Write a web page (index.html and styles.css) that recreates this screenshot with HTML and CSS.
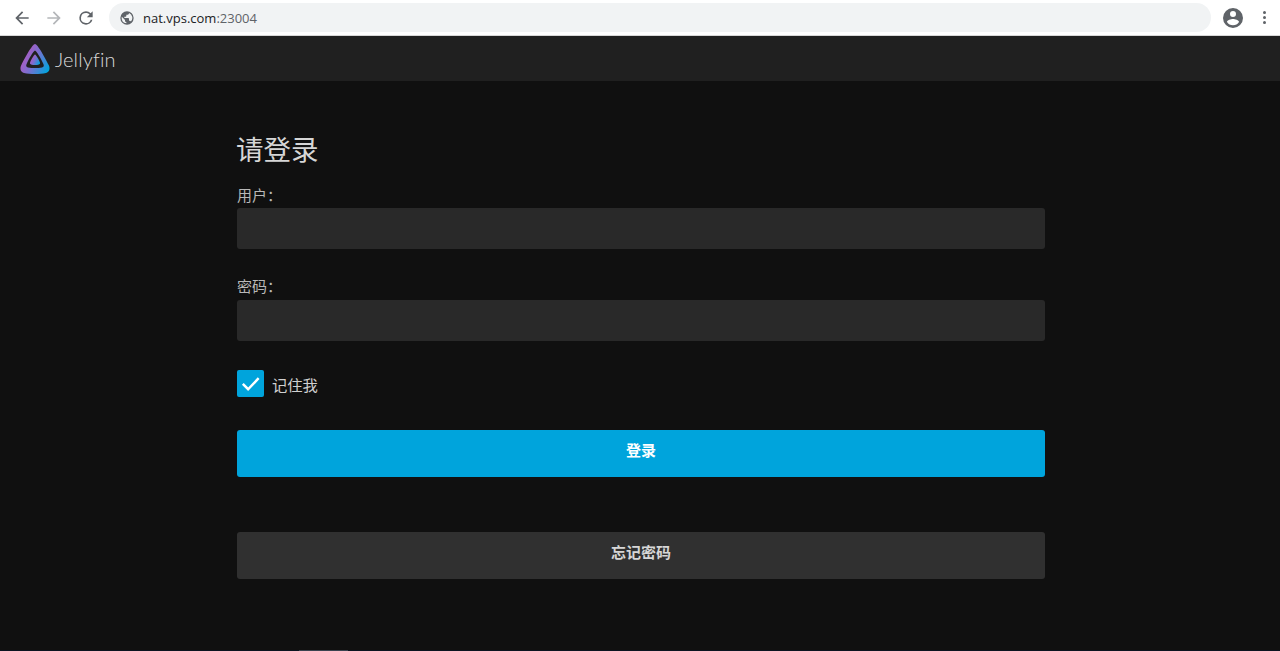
FILE: index.html
```html
<!DOCTYPE html>
<html lang="zh">
<head>
  <meta charset="UTF-8">
  <title>Jellyfin</title>
  <link rel="stylesheet" href="styles.css">
</head>
<body>
  <!-- Browser toolbar -->
  <div class="toolbar">
    <svg class="nav-icon" viewBox="0 0 24 24"><path fill="#5f6368" d="M20 11H7.830l5.590-5.590L12 4l-8 8 8 8 1.410-1.410L7.830 13H20z"/></svg>
    <svg class="nav-icon" viewBox="0 0 24 24"><path fill="#b4b6b9" d="M4 11h12.170l-5.590-5.590L12 4l8 8-8 8-1.410-1.410L16.170 13H4z"/></svg>
    <svg class="nav-icon" viewBox="0 0 24 24"><path fill="#5f6368" d="M17.650 6.350A7.960 7.960 0 0 0 12 4a8 8 0 1 0 7.730 10h-2.080A6 6 0 1 1 12 6c1.660 0 3.140.690 4.220 1.780L13 11h7V4z"/></svg>
    <div class="omnibox">
      <svg class="globe" viewBox="0 0 24 24"><path fill="#5f6368" d="M12 2a10 10 0 1 0 0 20 10 10 0 0 0 0-20zm-1 17.930A8 8 0 0 1 4 12c0-.620.080-1.210.210-1.790L9 15v1c0 1.100.900 2 2 2zm6.900-2.540A2 2 0 0 0 16 16h-1v-3c0-.550-.450-1-1-1H8v-2h2c.550 0 1-.450 1-1V7h2c1.100 0 2-.900 2-2v-.410a8 8 0 0 1 2.900 12.800z"/></svg>
      <span class="url">nat.vps.com<span class="url-port">:23004</span></span>
    </div>
    <svg class="avatar" viewBox="0 0 24 24"><path fill="#5f6368" d="M12 2a10 10 0 1 0 0 20 10 10 0 0 0 0-20zm0 3a3 3 0 1 1 0 6 3 3 0 0 1 0-6zm0 14.200a7.200 7.200 0 0 1-6-3.220c.030-1.990 4-3.080 6-3.080s5.970 1.090 6 3.080a7.200 7.200 0 0 1-6 3.220z"/></svg>
    <div class="menu-dots"><i></i><i></i><i></i></div>
  </div>

  <!-- App header -->
  <div class="header">
    <svg class="logo" viewBox="0 0 32 32">
      <defs>
        <linearGradient id="jf" x1="0.05" y1="0.3" x2="1" y2="0.8">
          <stop offset="0.1" stop-color="#aa5cc3"/>
          <stop offset="0.45" stop-color="#7a6fd0"/>
          <stop offset="1" stop-color="#00a4dc"/>
        </linearGradient>
      </defs>
      <path fill="url(#jf)" fill-rule="evenodd" d="M16 1C13.600 1 6.500 13.600 2.300 22 .600 25.500 1.500 29 5 30c3 .900 7 1 11 1s8-.100 11-1c3.500-1 4.400-4.500 2.700-8C25.500 13.600 18.400 1 16 1zm0 6.500c1.400 0 6.200 8.500 8.400 13.500.900 2 .300 3-1.400 3.400-2 .400-4.500.600-7 .600s-5-.200-7-.600c-1.700-.400-2.300-1.400-1.400-3.400C9.800 16 14.600 7.500 16 7.500z"/>
      <path fill="url(#jf)" d="M16 11.500c-1 0-5.500 7.500-5 9 .400 1 2.500 1.500 5 1.500s4.600-.500 5-1.500c.500-1.500-4-9-5-9z"/>
    </svg>
    <span class="brand">Jellyfin</span>
  </div>

  <!-- Login form -->
  <div class="page">
    <form class="login">
      <h1 class="login-title">请登录</h1>
      <label class="field-label">用户：</label>
      <div class="field"></div>
      <label class="field-label">密码：</label>
      <div class="field field-password"></div>
      <div class="remember">
        <span class="checkbox">
          <svg viewBox="0 0 24 24"><path fill="none" stroke="#fff" stroke-width="2.600" d="M4 12.500l5.500 5.500L20.500 6.500"/></svg>
        </span>
        <span class="remember-text">记住我</span>
      </div>
      <div class="btn btn-primary">登录</div>
      <div class="btn btn-secondary">忘记密码</div>
    </form>
  </div>

  <div class="bottom-strip"><div class="bottom-thumb"></div></div>
</body>
</html>
```

FILE: styles.css
```css
/* Page shell */
html, body {
  height: 100%;
}

body {
  margin: 0;
  display: flex;
  flex-direction: column;
  overflow: hidden;
  background-color: #101010;
  font-family: "Noto Sans", "Noto Sans CJK SC", sans-serif;
  color: #d6d6d6;
}

/* Browser toolbar */
.toolbar {
  height: 36px;
  flex: none;
  display: flex;
  align-items: center;
  padding-left: 12px;
  background-color: #fff;
  box-sizing: border-box;
  border-bottom: 1px solid #d8d8d8;
}

.nav-icon {
  width: 20px;
  height: 20px;
  margin-right: 12px;
  flex: none;
}

.omnibox {
  width: 1102px;
  height: 29px;
  margin-left: 1px;
  display: flex;
  align-items: center;
  padding-left: 10px;
  box-sizing: border-box;
  border-radius: 15px;
  background-color: #f1f3f4;
}

.globe {
  width: 16px;
  height: 16px;
  margin-right: 8px;
}

.url {
  font-family: "Open Sans", sans-serif;
  font-size: 13px;
  color: #202124;
}

.url-port {
  color: #5f6368;
}

.avatar {
  width: 24px;
  height: 24px;
  margin-left: 10px;
}

.menu-dots {
  display: flex;
  flex-direction: column;
  gap: 2px;
  margin-left: 18px;
}

.menu-dots i {
  width: 3px;
  height: 3px;
  border-radius: 50%;
  background-color: #5f6368;
}

/* App header */
.header {
  height: 45px;
  flex: none;
  display: flex;
  align-items: center;
  padding-left: 19px;
  background-color: #202020;
}

.logo {
  width: 32px;
  height: 32px;
  margin-right: 4px;
}

.brand {
  font-family: "Lato", sans-serif;
  font-weight: 300;
  font-size: 20px;
  letter-spacing: 0.15px;
  color: #dadada;
}

/* Login form */
.page {
  flex: 1;
  padding-left: 237px;
}

.login {
  width: 808px;
}

.login-title {
  margin: 49px 0 0 -1px;
  font-size: 27.500px;
  line-height: 40px;
  font-weight: 400;
  color: #d6d6d6;
}

.field-label {
  display: block;
  margin-top: 15px;
  font-size: 15px;
  line-height: 20px;
  color: #b8b8b8;
}

.field {
  height: 41px;
  margin-top: 3px;
  margin-bottom: 27px;
  border-radius: 3px;
  background-color: #292929;
}

.field + .field-label {
  margin-top: 0;
}

.field-password {
  margin-top: 4px;
}

.remember {
  display: flex;
  align-items: center;
  margin-top: 29px;
}

.checkbox {
  width: 27px;
  height: 27px;
  display: flex;
  align-items: center;
  justify-content: center;
  border-radius: 2px;
  background-color: #00a4dc;
}

.checkbox svg {
  width: 23px;
  height: 23px;
}

.remember-text {
  margin-left: 8px;
  font-size: 15.300px;
  color: #d0d0d0;
}

.btn {
  height: 47px;
  box-sizing: border-box;
  padding-bottom: 8px;
  display: flex;
  align-items: center;
  justify-content: center;
  border-radius: 3px;
  font-size: 15px;
  font-weight: 700;
}

.btn-primary {
  margin-top: 33px;
  background-color: #00a4dc;
  color: #fff;
}

.btn-secondary {
  margin-top: 55px;
  background-color: #303030;
  color: #d6d6d6;
}

/* Sliver of the next element at the window's bottom edge */
.bottom-strip {
  height: 1px;
  flex: none;
  padding-left: 299px;
  background-color: #0b1420;
}

.bottom-thumb {
  width: 49px;
  height: 1px;
  background-color: #3a4450;
}
```
